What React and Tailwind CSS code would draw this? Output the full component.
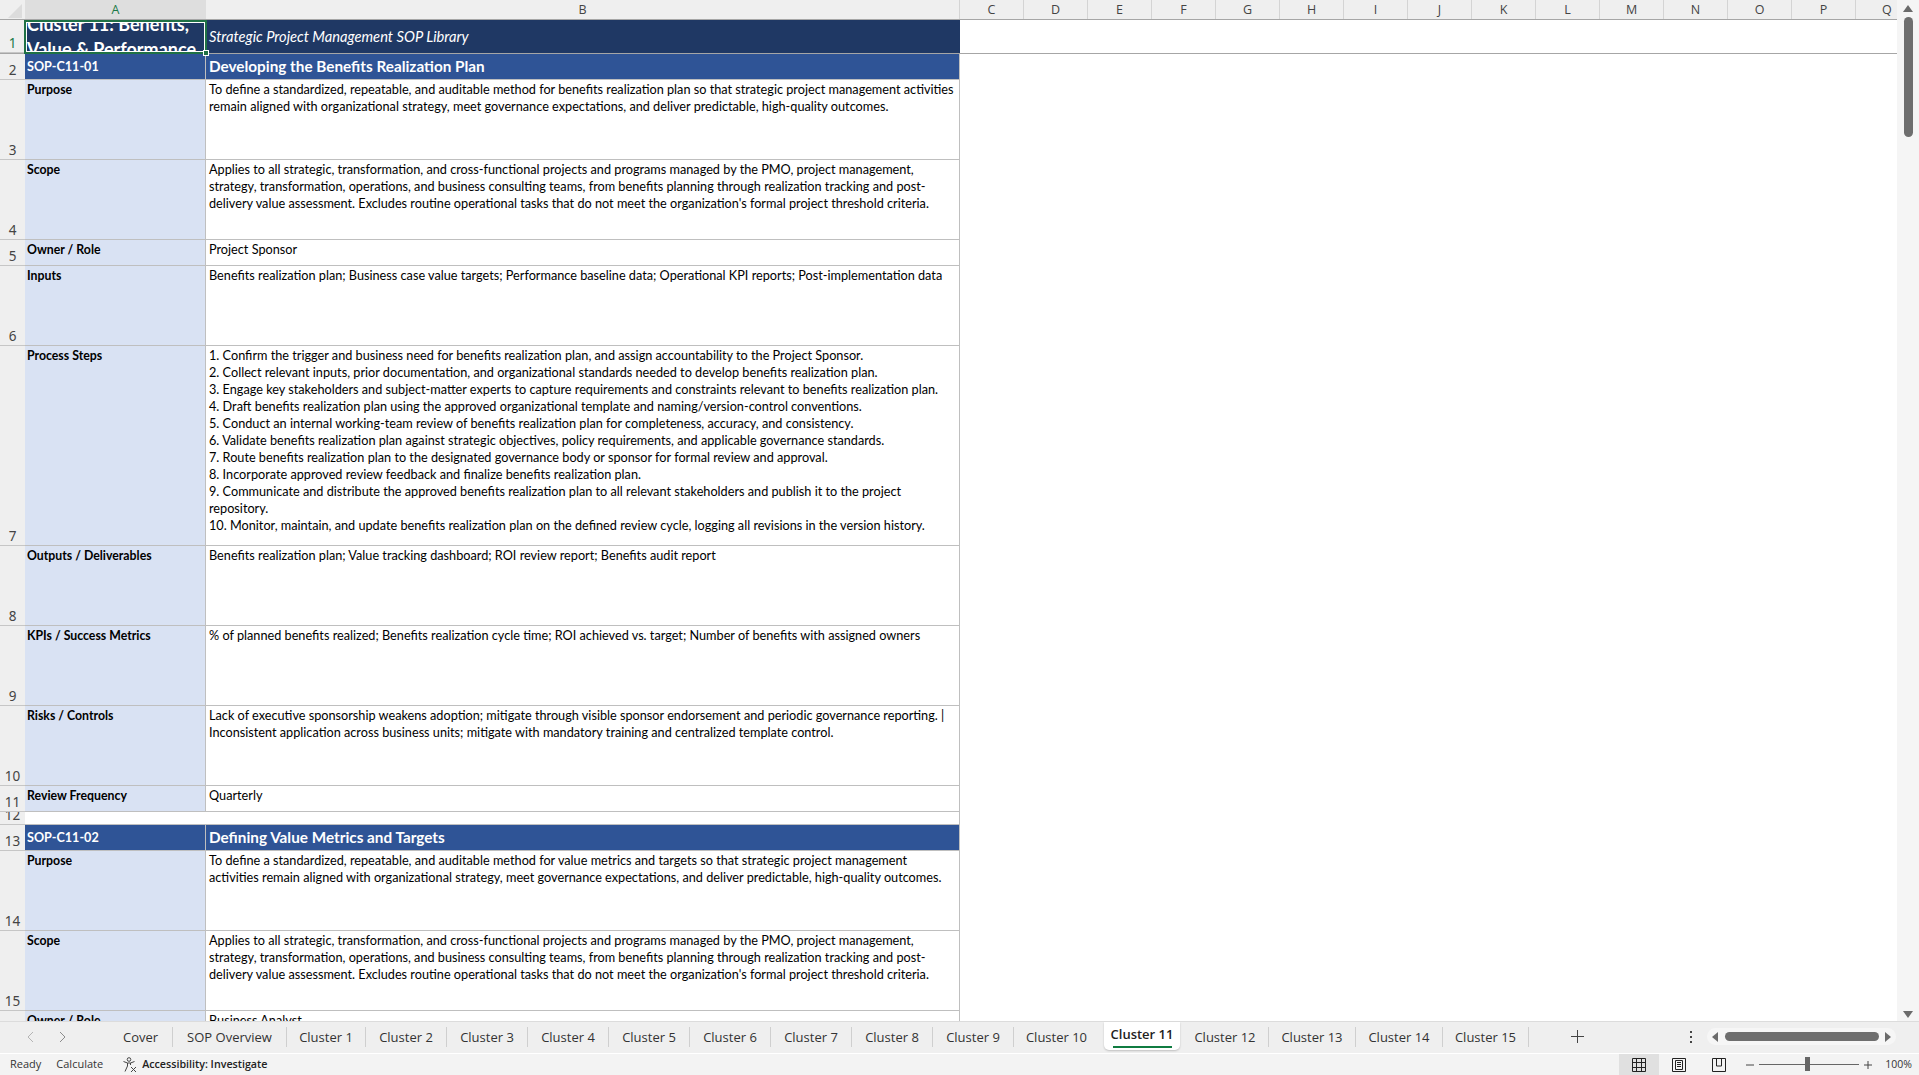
import React from "react";

const cols = ["C", "D", "E", "F", "G", "H", "I", "J", "K", "L", "M", "N", "O", "P"];

const sop1 = [
  { n: 3, h: "h-[80px]", label: "Purpose", lines: ["To define a standardized, repeatable, and auditable method for benefits realization plan so that strategic project management activities", "remain aligned with organizational strategy, meet governance expectations, and deliver predictable, high-quality outcomes."] },
  { n: 4, h: "h-[80px]", label: "Scope", lines: ["Applies to all strategic, transformation, and cross-functional projects and programs managed by the PMO, project management,", "strategy, transformation, operations, and business consulting teams, from benefits planning through realization tracking and post-", "delivery value assessment. Excludes routine operational tasks that do not meet the organization's formal project threshold criteria."] },
  { n: 5, h: "h-[26px]", label: "Owner / Role", lines: ["Project Sponsor"] },
  { n: 6, h: "h-[80px]", label: "Inputs", lines: ["Benefits realization plan; Business case value targets; Performance baseline data; Operational KPI reports; Post-implementation data"] },
  {
    n: 7,
    h: "h-[200px]",
    label: "Process Steps",
    lines: [
      "1. Confirm the trigger and business need for benefits realization plan, and assign accountability to the Project Sponsor.",
      "2. Collect relevant inputs, prior documentation, and organizational standards needed to develop benefits realization plan.",
      "3. Engage key stakeholders and subject-matter experts to capture requirements and constraints relevant to benefits realization plan.",
      "4. Draft benefits realization plan using the approved organizational template and naming/version-control conventions.",
      "5. Conduct an internal working-team review of benefits realization plan for completeness, accuracy, and consistency.",
      "6. Validate benefits realization plan against strategic objectives, policy requirements, and applicable governance standards.",
      "7. Route benefits realization plan to the designated governance body or sponsor for formal review and approval.",
      "8. Incorporate approved review feedback and finalize benefits realization plan.",
      "9. Communicate and distribute the approved benefits realization plan to all relevant stakeholders and publish it to the project",
      "repository.",
      "10. Monitor, maintain, and update benefits realization plan on the defined review cycle, logging all revisions in the version history.",
    ],
  },
  { n: 8, h: "h-[80px]", label: "Outputs / Deliverables", lines: ["Benefits realization plan; Value tracking dashboard; ROI review report; Benefits audit report"] },
  { n: 9, h: "h-[80px]", label: "KPIs / Success Metrics", lines: ["% of planned benefits realized; Benefits realization cycle time; ROI achieved vs. target; Number of benefits with assigned owners"] },
  { n: 10, h: "h-[80px]", label: "Risks / Controls", lines: ["Lack of executive sponsorship weakens adoption; mitigate through visible sponsor endorsement and periodic governance reporting. |", "Inconsistent application across business units; mitigate with mandatory training and centralized template control."] },
  { n: 11, h: "h-[26px]", label: "Review Frequency", lines: ["Quarterly"] },
];

const sop2 = [
  { n: 14, h: "h-[80px]", label: "Purpose", lines: ["To define a standardized, repeatable, and auditable method for value metrics and targets so that strategic project management", "activities remain aligned with organizational strategy, meet governance expectations, and deliver predictable, high-quality outcomes."] },
  { n: 15, h: "h-[80px]", label: "Scope", lines: ["Applies to all strategic, transformation, and cross-functional projects and programs managed by the PMO, project management,", "strategy, transformation, operations, and business consulting teams, from benefits planning through realization tracking and post-", "delivery value assessment. Excludes routine operational tasks that do not meet the organization's formal project threshold criteria."] },
  { n: 16, h: "h-[26px]", label: "Owner / Role", lines: ["Business Analyst"] },
];

const tabs = [
  { name: "Cover", w: "w-[64px]" },
  { name: "SOP Overview", w: "w-[114px]" },
  { name: "Cluster 1", w: "w-[79px]" },
  { name: "Cluster 2", w: "w-[81px]" },
  { name: "Cluster 3", w: "w-[81px]" },
  { name: "Cluster 4", w: "w-[81px]" },
  { name: "Cluster 5", w: "w-[81px]" },
  { name: "Cluster 6", w: "w-[81px]" },
  { name: "Cluster 7", w: "w-[81px]" },
  { name: "Cluster 8", w: "w-[81px]" },
  { name: "Cluster 9", w: "w-[81px]" },
  { name: "Cluster 10", w: "w-[90px] pr-[5px]", noSep: true },
  { name: "Cluster 11", active: true },
  { name: "Cluster 12", w: "w-[89px] pl-[2px]" },
  { name: "Cluster 13", w: "w-[87px]" },
  { name: "Cluster 14", w: "w-[87px]" },
  { name: "Cluster 15", w: "w-[86px]" },
];

function RowNum({ n, active }) {
  return (
    <div className={`w-[25px] shrink-0 flex items-end justify-center overflow-hidden bg-[#efefef] text-[13.5px] leading-[17px] border-b border-[#c6c6c6] ${active ? "text-[#1b7a48]" : "text-[#444444]"}`}>
      {n}
    </div>
  );
}

function InfoRow({ row }) {
  return (
    <div className={`flex shrink-0 ${row.h}`}>
      <RowNum n={row.n} />
      <div className="w-[181px] shrink-0 pl-[2px] pt-[1px] bg-[#d9e2f3] border-r border-b border-[#bfbfbf] font-['Lato'] font-bold text-[12.3px] leading-[17px] text-black whitespace-nowrap overflow-hidden">
        {row.label}
      </div>
      <div className="w-[754px] shrink-0 pl-[3px] pt-[1px] bg-white border-r border-b border-[#bfbfbf] font-['Lato'] text-[12.7px] leading-[17px] text-black overflow-hidden">
        {row.lines.map((l, i) => (
          <div key={i} className="whitespace-nowrap">{l}</div>
        ))}
      </div>
    </div>
  );
}

function SopHeader({ n, id, title }) {
  return (
    <div className="flex h-[26px] shrink-0">
      <RowNum n={n} />
      <div className="w-[181px] shrink-0 pl-[2px] pt-[2px] flex items-center bg-[#2f5496] border-r border-b border-[#bfbfbf] font-['Lato'] font-bold text-[12.6px] text-white">{id}</div>
      <div className="w-[754px] shrink-0 pl-[3px] flex items-center bg-[#2f5496] border-r border-b border-[#bfbfbf] font-['Lato'] font-bold text-[15.3px] text-white">{title}</div>
    </div>
  );
}

function ColumnHeader() {
  return (
    <div className="flex h-[20px] shrink-0 bg-[#efefef] border-b border-[#a6a6a6] font-['Open_Sans'] text-[12.5px] leading-[19px] text-[#444444] overflow-hidden">
      <div className="w-[25px] shrink-0 flex items-end justify-end pr-[3px] pb-[1px]">
        <svg width="14" height="14" viewBox="0 0 14 14"><path d="M14 0v14H0z" fill="#dcdcdc" /></svg>
      </div>
      <div className="w-[181px] shrink-0 text-center bg-[#dedede] text-[#1b7a48]">A</div>
      <div className="w-[754px] shrink-0 text-center border-r border-[#d4d4d4]">B</div>
      {cols.map((c) => (
        <div key={c} className="w-[64px] shrink-0 text-center border-r border-[#d4d4d4]">{c}</div>
      ))}
      <div className="w-[41px] shrink-0 pl-[26px]">Q</div>
    </div>
  );
}

function TitleRow() {
  return (
    <div className="relative flex h-[34px] shrink-0 border-b border-[#a6a6a6]">
      <RowNum n={1} active />
      <div className="w-[181px] shrink-0 pl-[2px] flex items-center bg-[#1f3864] overflow-hidden font-['Lato'] font-bold text-[18px] leading-[25px] text-white">
        <div className="whitespace-nowrap">Cluster 11: Benefits,<br />Value &amp; Performance</div>
      </div>
      <div className="w-[754px] shrink-0 pl-[3px] flex items-center bg-[#1f3864] font-['Lato'] italic text-[14.7px] text-white">
        Strategic Project Management SOP Library
      </div>
      {/* selected cell outline */}
      <div className="absolute left-[24px] top-0 w-[183px] h-[34px] border-2 border-[#1f7145]">
        <div className="absolute inset-0 border border-white" />
        <div className="absolute -right-[4px] -bottom-[4px] w-[6px] h-[6px] bg-[#1f7145] border border-white" />
      </div>
    </div>
  );
}

function Scrollbar() {
  return (
    <div className="w-[22px] shrink-0 bg-[#f5f5f5] flex flex-col items-center">
      <svg className="mt-[5px] shrink-0" width="10" height="7" viewBox="0 0 10 7"><path d="M5 0l5 7H0z" fill="#6b6b6b" /></svg>
      <div className="mt-[5px] w-[9px] h-[120px] shrink-0 rounded-full bg-[#6e6e6e]" />
      <div className="flex-1" />
      <svg className="mb-[3px] shrink-0" width="10" height="7" viewBox="0 0 10 7"><path d="M5 7L0 0h10z" fill="#6b6b6b" /></svg>
    </div>
  );
}

function TabBar() {
  return (
    <div className="flex h-[32px] shrink-0 bg-[#efefef] border-t border-[#dcdcdc] font-['Open_Sans'] text-[13px] text-[#333333]">
      <div className="w-[109px] shrink-0 flex items-center pl-[26px] gap-[25px] pb-[2px]">
        <svg width="8" height="12" viewBox="0 0 8 12" fill="none" stroke="#b4b4b4"><path d="M7 1L2 6l5 5" /></svg>
        <svg width="8" height="12" viewBox="0 0 8 12" fill="none" stroke="#8c8c8c"><path d="M1 1l5 5-5 5" /></svg>
      </div>
      {tabs.map((t) =>
        t.active ? (
          <div key={t.name} className="w-[76px] shrink-0 h-[28px] bg-white rounded-b-[5px] shadow-[0_1px_2px_rgba(0,0,0,0.2)] flex flex-col items-center">
            <div className="mt-[2px] h-[20px] leading-[20px] font-semibold text-[#222222] whitespace-nowrap">{t.name}</div>
            <div className="mt-[2px] w-[59px] h-[2px] bg-[#107c41]" />
          </div>
        ) : (
          <div key={t.name} className={`${t.w} shrink-0 flex items-center justify-center pb-[2px] whitespace-nowrap`}>
            <div className={`w-full h-[20px] leading-[20px] text-center ${t.noSep ? "" : "border-r border-[#cfcfcf]"}`}>{t.name}</div>
          </div>
        )
      )}
      <div className="ml-[41px] w-[14px] shrink-0 flex items-center justify-center pb-[2px]">
        <svg width="13" height="13" viewBox="0 0 13 13" stroke="#444444"><path d="M6.5 0v13M0 6.5h13" /></svg>
      </div>
      <div className="ml-[105px] w-[3px] shrink-0 flex flex-col items-center justify-center gap-[3px] pb-[2px]">
        <span className="w-[2px] h-[2px] bg-[#444444]" />
        <span className="w-[2px] h-[2px] bg-[#444444]" />
        <span className="w-[2px] h-[2px] bg-[#444444]" />
      </div>
      <div className="ml-[15px] mt-[6px] w-[189px] h-[17px] shrink-0 rounded-full bg-[#f6f6f6] flex items-center justify-between px-[5px]">
        <svg width="6" height="10" viewBox="0 0 6 10"><path d="M0 5l6-5v10z" fill="#6b6b6b" /></svg>
        <div className="w-[154px] h-[9px] rounded-full bg-[#6e6e6e]" />
        <svg width="6" height="10" viewBox="0 0 6 10"><path d="M6 5L0 0v10z" fill="#6b6b6b" /></svg>
      </div>
    </div>
  );
}

function StatusBar() {
  return (
    <div className="flex items-center h-[22px] shrink-0 bg-[#f3f3f3] border-t border-white font-['Open_Sans'] text-[11px] text-[#333333]">
      <span className="ml-[10px]">Ready</span>
      <span className="ml-[15px]">Calculate</span>
      <svg className="ml-[19px]" width="16" height="16" viewBox="0 0 16 16" fill="none" stroke="#444444" strokeWidth="1">
        <circle cx="7" cy="2.5" r="1.8" />
        <path d="M1.5 4.5l4 1.5h3l4-1.5M5.5 6v3l-2.5 5.5M8.5 6v2" />
        <path d="M9 10l5 5M14 10l-5 5" />
      </svg>
      <span className="ml-[4px] font-semibold text-[10.7px] text-[#222222]">Accessibility: Investigate</span>
      <div className="flex-1" />
      <div className="w-[40px] h-full bg-[#e0e0e0] flex items-center justify-center">
        <svg width="14" height="14" viewBox="0 0 14 14" fill="none" stroke="#222222"><path d="M.5.5h13v13H.5zM.5 4.5h13M.5 9.5h13M4.5.5v13M9.5.5v13" /></svg>
      </div>
      <div className="w-[40px] flex items-center justify-center">
        <svg width="14" height="14" viewBox="0 0 14 14" fill="none" stroke="#222222"><path d="M.5.5h13v13H.5zM3.5 2.5h7v9h-7zM5 4.5h4M5 6.5h4M5 8.5h4" /></svg>
      </div>
      <div className="w-[40px] flex items-center justify-center">
        <svg width="14" height="14" viewBox="0 0 14 14" fill="none" stroke="#222222"><path d="M.5.5h13v13H.5zM4.5.5v7.5h5V.5" /></svg>
      </div>
      <svg className="ml-[7px]" width="8" height="8" viewBox="0 0 8 8" stroke="#444444"><path d="M0 4h8" /></svg>
      <div className="relative ml-[5px] w-[100px] h-[1px] bg-[#666666]">
        <div className="absolute left-[46px] -top-[7px] w-[5px] h-[14px] bg-[#666666]" />
      </div>
      <svg className="ml-[5px]" width="8" height="8" viewBox="0 0 8 8" stroke="#444444"><path d="M0 4h8M4 0v8" /></svg>
      <span className="ml-[13px] mr-[7px] text-[10.5px]">100%</span>
    </div>
  );
}

export default function App() {
  return (
    <div className="h-screen w-full flex flex-col overflow-hidden bg-white">
      <div className="flex flex-1 min-h-0">
        <div className="flex-1 min-w-0 flex flex-col overflow-hidden">
          <ColumnHeader />
          <TitleRow />
          <SopHeader n={2} id="SOP-C11-01" title="Developing the Benefits Realization Plan" />
          {sop1.map((r) => <InfoRow key={r.n} row={r} />)}
          <div className="flex h-[13px] shrink-0">
            <RowNum n={12} />
            <div className="w-[935px] shrink-0 bg-white border-b border-r border-[#bfbfbf]" />
          </div>
          <SopHeader n={13} id="SOP-C11-02" title="Defining Value Metrics and Targets" />
          {sop2.map((r) => <InfoRow key={r.n} row={r} />)}
        </div>
        <Scrollbar />
      </div>
      <TabBar />
      <StatusBar />
    </div>
  );
}
